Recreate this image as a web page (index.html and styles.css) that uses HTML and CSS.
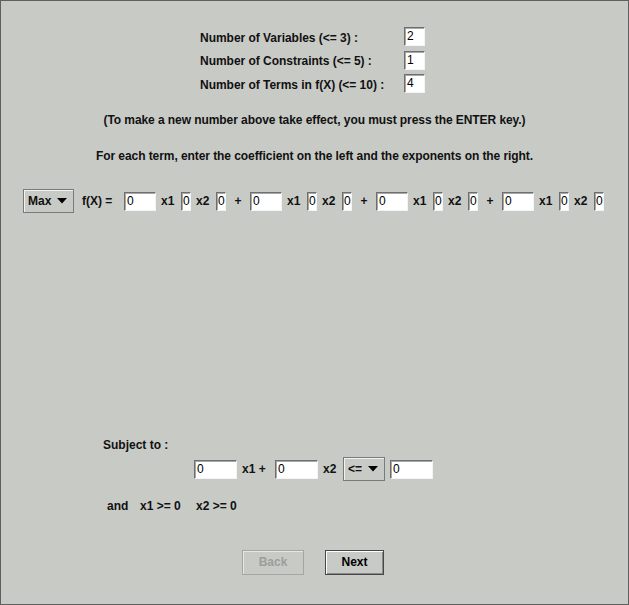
FILE: index.html
```html
<!DOCTYPE html>
<html>
<head>
<meta charset="utf-8">
<link rel="stylesheet" href="styles.css">
</head>
<body>
<div class="frame">
  <div class="params">
    <div class="prow"><span class="plabel">Number of Variables (&lt;= 3) :</span><span class="field f-param">2</span></div>
    <div class="prow"><span class="plabel">Number of Constraints (&lt;= 5) :</span><span class="field f-param">1</span></div>
    <div class="prow"><span class="plabel">Number of Terms in f(X) (&lt;= 10) :</span><span class="field f-param">4</span></div>
  </div>
  <p class="note note1">(To make a new number above take effect, you must press the ENTER key.)</p>
  <p class="note note2">For each term, enter the coefficient on the left and the exponents on the right.</p>

  <div class="objective">
    <div class="combo combo-max"><span class="combo-text">Max</span><svg class="arrow" width="10" height="6" viewBox="0 0 10 6"><polygon points="0,0 10,0 5,5.5" fill="#000"/></svg></div>
    <span class="lbl lbl-fx">f(X) =</span>
    <span class="field f-coef">0</span><span class="lbl lbl-x">x1</span><span class="field f-exp">0</span><span class="lbl lbl-x">x2</span><span class="field f-exp">0</span><span class="lbl lbl-plus">+</span>
    <span class="field f-coef">0</span><span class="lbl lbl-x">x1</span><span class="field f-exp">0</span><span class="lbl lbl-x">x2</span><span class="field f-exp">0</span><span class="lbl lbl-plus">+</span>
    <span class="field f-coef">0</span><span class="lbl lbl-x">x1</span><span class="field f-exp">0</span><span class="lbl lbl-x">x2</span><span class="field f-exp">0</span><span class="lbl lbl-plus">+</span>
    <span class="field f-coef">0</span><span class="lbl lbl-x">x1</span><span class="field f-exp">0</span><span class="lbl lbl-x">x2</span><span class="field f-exp">0</span>
  </div>

  <div class="subject">Subject to :</div>
  <div class="constraint">
    <span class="field f-con">0</span><span class="lbl lbl-x1p">x1 +</span><span class="field f-con">0</span><span class="lbl lbl-x2">x2</span>
    <div class="combo combo-rel"><span class="combo-text">&lt;=</span><svg class="arrow" width="10" height="6" viewBox="0 0 10 6"><polygon points="0,0 10,0 5,5.5" fill="#000"/></svg></div>
    <span class="field f-con f-rhs">0</span>
  </div>
  <div class="nonneg"><span class="nn-and">and</span><span class="nn-x1">x1 &gt;= 0</span><span class="nn-x2">x2 &gt;= 0</span></div>

  <div class="buttons">
    <div class="btn btn-back">Back</div>
    <div class="btn btn-next">Next</div>
  </div>
</div>
</body>
</html>
```
FILE: styles.css
```css
html, body {
  margin: 0;
  padding: 0;
  background: #c8cac6;
}
.frame {
  width: 629px;
  height: 605px;
  box-sizing: border-box;
  border: 1px solid #5c615e;
  background: #c8cac6;
  font-family: "Liberation Sans", Arial, sans-serif;
  font-size: 12px;
  font-weight: bold;
  color: #111;
  overflow: hidden;
}
.params {
  margin-top: 26px;
  padding-left: 199px;
  display: flex;
  flex-direction: column;
  gap: 4.5px;
}
.prow {
  display: flex;
  align-items: center;
  height: 19px;
}
.plabel {
  width: 204px;
  padding-top: 2px;
  letter-spacing: -0.03px;
}
.field {
  display: inline-block;
  box-sizing: border-box;
  height: 19px;
  background: #fff;
  border-style: solid;
  border-width: 1px;
  border-color: #6e6e6e #f4f4f4 #f4f4f4 #6e6e6e;
  box-shadow: inset 1px 1px 0 #a8a8a8;
  font-weight: normal;
  font-size: 12px;
  line-height: 17px;
  padding-left: 2px;
  color: #000;
  overflow: hidden;
}
.f-param { width: 21px; }
.f-coef { width: 32px; }
.f-exp { width: 10px; padding-left: 1px; }
.f-con { width: 43px; }
.note {
  margin: 0;
  height: 16px;
  line-height: 16px;
  text-align: center;
  letter-spacing: -0.07px;
}
.note1 { margin-top: 19px; }
.note2 { margin-top: 20px; }
.objective {
  margin-top: 25px;
  height: 24px;
  padding-left: 22px;
  display: flex;
  align-items: center;
}
.combo {
  box-sizing: border-box;
  height: 24px;
  border: 1px solid #7a7a7a;
  box-shadow: inset 1px 1px 0 #f2f2f2;
  display: flex;
  align-items: center;
  justify-content: space-between;
  padding: 0 6px 0 4px;
}
.combo-max { width: 51px; }
.combo-rel { width: 42px; }
.arrow { display: block; }
.lbl {
  display: inline-block;
  box-sizing: border-box;
  white-space: nowrap;
}
.lbl-fx { width: 50px; padding-left: 8px; }
.lbl-x { width: 25px; padding-left: 5px; }
.lbl-plus { width: 24px; text-align: center; }
.subject {
  margin-top: 224px;
  height: 16px;
  line-height: 16px;
  padding-left: 102px;
}
.constraint {
  margin-top: 4px;
  height: 24px;
  padding-left: 193px;
  display: flex;
  align-items: center;
}
.lbl-x1p { width: 38px; padding-left: 5px; }
.lbl-x2 { width: 25px; padding-left: 5px; }
.f-rhs { margin-left: 5px; }
.nonneg {
  margin-top: 17px;
  height: 16px;
  line-height: 16px;
  padding-left: 106px;
  display: flex;
}
.nn-and { width: 33px; }
.nn-x1 { width: 56px; }
.buttons {
  margin-top: 36px;
  padding-left: 241px;
  display: flex;
  gap: 21px;
}
.btn {
  box-sizing: border-box;
  height: 25px;
  line-height: 23px;
  text-align: center;
}
.btn-back {
  width: 62px;
  border: 1px solid #a4a6a2;
  box-shadow: inset 1px 1px 0 #e6e6e4;
  color: #9c9e9a;
}
.btn-next {
  width: 59px;
  border: 1px solid #474747;
  box-shadow: inset 1px 1px 0 #ffffff, inset -1px -1px 0 #8a8a8a;
  color: #000;
}
```
